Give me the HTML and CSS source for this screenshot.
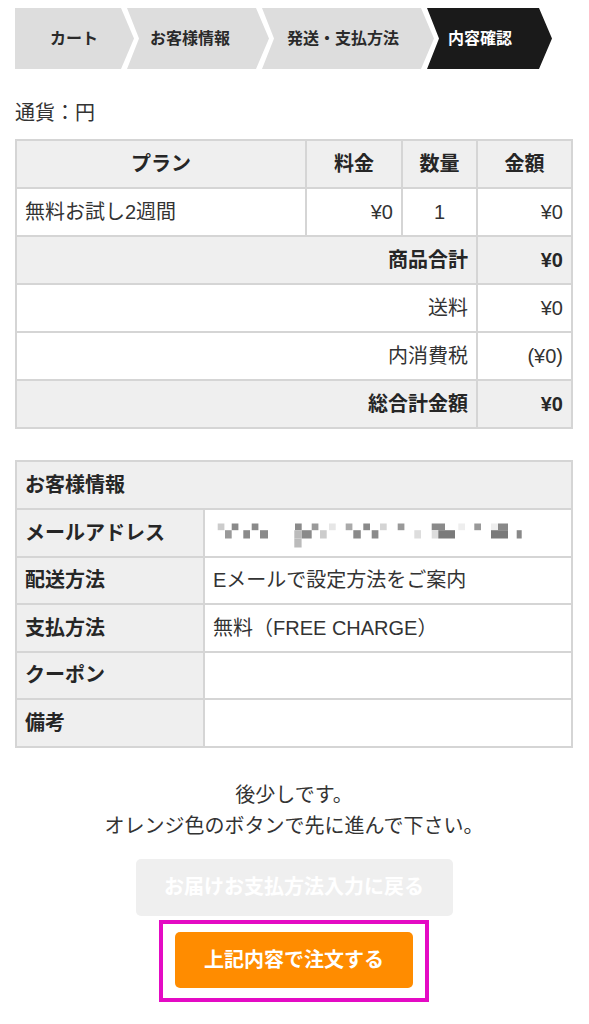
FILE: index.html
```html
<!DOCTYPE html>
<html lang="ja">
<head>
<meta charset="utf-8">
<title>内容確認</title>
<link rel="stylesheet" href="styles.css">
</head>
<body>
<div class="page">
  <nav class="steps">
    <div class="step s1">カート</div>
    <div class="step s2">お客様情報</div>
    <div class="step s3">発送・支払方法</div>
    <div class="step s4 current">内容確認</div>
  </nav>

  <p class="currency">通貨：円</p>

  <table class="tbl order">
    <colgroup>
      <col class="w-plan">
      <col class="w-price">
      <col class="w-qty">
      <col class="w-amt">
    </colgroup>
    <tr class="grey">
      <th class="c">プラン</th>
      <th class="c">料金</th>
      <th class="c">数量</th>
      <th class="c">金額</th>
    </tr>
    <tr>
      <td>無料お試し2週間</td>
      <td class="r">¥0</td>
      <td class="c">1</td>
      <td class="r">¥0</td>
    </tr>
    <tr class="grey">
      <th colspan="3" class="r">商品合計</th>
      <th class="r">¥0</th>
    </tr>
    <tr>
      <td colspan="3" class="r">送料</td>
      <td class="r">¥0</td>
    </tr>
    <tr>
      <td colspan="3" class="r">内消費税</td>
      <td class="r">(¥0)</td>
    </tr>
    <tr class="grey">
      <th colspan="3" class="r">総合計金額</th>
      <th class="r">¥0</th>
    </tr>
  </table>

  <table class="tbl info">
    <colgroup>
      <col class="w-label">
      <col class="w-value">
    </colgroup>
    <tr class="grey">
      <th colspan="2" class="l">お客様情報</th>
    </tr>
    <tr>
      <th class="label">メールアドレス</th>
      <td class="blur">
        <svg class="pix" width="366" height="46" viewBox="0 0 366 46" aria-hidden="true">
          <rect x="12.7" y="13.5" width="6.7" height="6.7" fill="#cccccc"/>
          <rect x="26.7" y="13.5" width="6.7" height="6.7" fill="#8a8a8a"/>
          <rect x="46.7" y="13.5" width="6.7" height="6.7" fill="#8a8a8a"/>
          <rect x="90" y="13.5" width="6.7" height="6.7" fill="#8a8a8a"/>
          <rect x="106.7" y="13.5" width="6.7" height="6.7" fill="#9a9a9a"/>
          <rect x="124" y="13.5" width="6.7" height="6.7" fill="#e6e6e6"/>
          <rect x="140.7" y="13.5" width="6.7" height="6.7" fill="#aaaaaa"/>
          <rect x="158.3" y="13.5" width="6.7" height="6.7" fill="#8a8a8a"/>
          <rect x="175" y="13.5" width="6.7" height="6.7" fill="#d4d4d4"/>
          <rect x="192.7" y="13.5" width="6.7" height="6.7" fill="#999999"/>
          <rect x="226.7" y="13.5" width="13.3" height="6.7" fill="#8a8a8a"/>
          <rect x="253.3" y="13.5" width="6.7" height="6.7" fill="#eeeeee"/>
          <rect x="269.3" y="13.5" width="6.7" height="6.7" fill="#999999"/>
          <rect x="286" y="13.5" width="7" height="6.7" fill="#eeeeee"/>
          <rect x="293" y="13.5" width="10" height="6.7" fill="#888888"/>
          <rect x="20" y="20.2" width="6.7" height="8.3" fill="#999999"/>
          <rect x="38.3" y="20.2" width="6.7" height="8.3" fill="#8a8a8a"/>
          <rect x="55" y="20.2" width="8" height="8.3" fill="#8a8a8a"/>
          <rect x="89.3" y="20.2" width="7.3" height="8.3" fill="#bbbbbb"/>
          <rect x="96.7" y="20.2" width="10" height="8.3" fill="#8a8a8a"/>
          <rect x="115" y="20.2" width="6.7" height="8.3" fill="#cccccc"/>
          <rect x="148.3" y="20.2" width="7.5" height="8.3" fill="#8a8a8a"/>
          <rect x="166.7" y="20.2" width="6.7" height="8.3" fill="#8a8a8a"/>
          <rect x="209.3" y="20.2" width="6.7" height="8.3" fill="#dddddd"/>
          <rect x="226.7" y="20.2" width="6.7" height="8.3" fill="#dddddd"/>
          <rect x="233.3" y="20.2" width="16.7" height="8.3" fill="#7a7a7a"/>
          <rect x="286" y="20.2" width="17" height="8.3" fill="#7a7a7a"/>
          <rect x="311.7" y="20.2" width="5" height="8.3" fill="#888888"/>
          <rect x="89.3" y="28.5" width="7.3" height="9" fill="#bbbbbb"/>
        </svg>
      </td>
    </tr>
    <tr>
      <th class="label">配送方法</th>
      <td>Eメールで設定方法をご案内</td>
    </tr>
    <tr>
      <th class="label">支払方法</th>
      <td>無料（FREE CHARGE）</td>
    </tr>
    <tr>
      <th class="label">クーポン</th>
      <td></td>
    </tr>
    <tr>
      <th class="label">備考</th>
      <td></td>
    </tr>
  </table>

  <p class="message">後少しです。<br>オレンジ色のボタンで先に進んで下さい。</p>

  <div class="actions">
    <button class="btn btn-back" type="button">お届けお支払方法入力に戻る</button>
    <div class="highlight">
      <button class="btn btn-order" type="button">上記内容で注文する</button>
    </div>
  </div>
</div>
</body>
</html>
```
FILE: styles.css
```css
* {
  box-sizing: border-box;
}

html, body {
  margin: 0;
  padding: 0;
  background: #ffffff;
}

body {
  font-family: "Liberation Sans", "Noto Sans CJK JP", sans-serif;
  color: #333333;
  font-size: 20px;
}

.page {
  width: 589px;
  padding: 8px 16px 0 15px;
}

/* ---------- steps ---------- */
.steps {
  display: flex;
  height: 61px;
}

.step {
  height: 61px;
  display: flex;
  align-items: center;
  background: #dddddd;
  color: #2a2a2a;
  font-size: 16px;
  font-weight: 700;
  line-height: 1;
  white-space: nowrap;
  margin-left: -7px;
  clip-path: polygon(0 0, calc(100% - 13px) 0, 100% 50%, calc(100% - 13px) 100%, 0 100%, 12px 50%);
}

.s1 {
  width: 119px;
  padding-left: 35px;
  margin-left: 0;
  clip-path: polygon(0 0, calc(100% - 13px) 0, 100% 50%, calc(100% - 13px) 100%, 0 100%);
}

.s2 {
  width: 142px;
  padding-left: 23px;
}

.s3 {
  width: 172px;
  padding-left: 25px;
}

.s4 {
  width: 125px;
  padding-left: 21px;
}

.step.current {
  background: #1a1a1a;
  color: #ffffff;
}

/* ---------- currency ---------- */
.currency {
  margin: 29px 0 0;
  line-height: 30px;
  font-size: 20px;
}

/* ---------- tables ---------- */
.tbl {
  width: 558px;
  table-layout: fixed;
  border-collapse: separate;
  border-spacing: 0;
  border-top: 2px solid #d5d5d5;
  border-left: 2px solid #d5d5d5;
  font-size: 20px;
}

.tbl th,
.tbl td {
  border-right: 2px solid #d5d5d5;
  border-bottom: 2px solid #d5d5d5;
  padding: 0 8px;
  line-height: 24px;
  vertical-align: middle;
  white-space: nowrap;
  overflow: hidden;
}

.tbl td {
  font-weight: 400;
  background: #ffffff;
  color: #333333;
}

.tbl th {
  font-weight: 700;
  color: #262626;
  background: #efefef;
}

.tbl .grey th,
.tbl .grey td {
  background: #efefef;
}

.order {
  margin-top: 11px;
}

.order th,
.order td {
  height: 48px;
}

.w-plan { width: 290px; }
.w-price { width: 96px; }
.w-qty { width: 75px; }
.w-amt { width: 95px; }

.info {
  margin-top: 31px;
}

.info th,
.info td {
  height: 47.5px;
}

.w-label { width: 188px; }
.w-value { width: 368px; }

.tbl .label {
  text-align: left;
  background: #efefef;
}

.l { text-align: left; }
.r { text-align: right; }
.c { text-align: center; }

.tbl td.blur {
  padding: 0;
}

.pix {
  display: block;
}

/* ---------- message ---------- */
.message {
  margin: 32px 0 0;
  text-align: center;
  line-height: 31px;
  font-size: 20px;
  color: #333333;
}

/* ---------- buttons ---------- */
.actions {
  display: flex;
  flex-direction: column;
  align-items: center;
  margin-top: 17px;
}

.btn {
  font-family: "Liberation Sans", "Noto Sans CJK JP", sans-serif;
  font-size: 20px;
  font-weight: 700;
  line-height: 1;
  border: none;
  border-radius: 5px;
  color: #ffffff;
  padding: 0;
  margin: 0;
}

.btn-back {
  width: 317px;
  height: 57px;
  background: #efefef;
}

.highlight {
  margin-top: 4px;
  border: 4px solid #e40ac4;
  padding: 8px 12px 10px 12px;
}

.btn-order {
  display: block;
  width: 238px;
  height: 56px;
  background: #ff8c00;
}
```
